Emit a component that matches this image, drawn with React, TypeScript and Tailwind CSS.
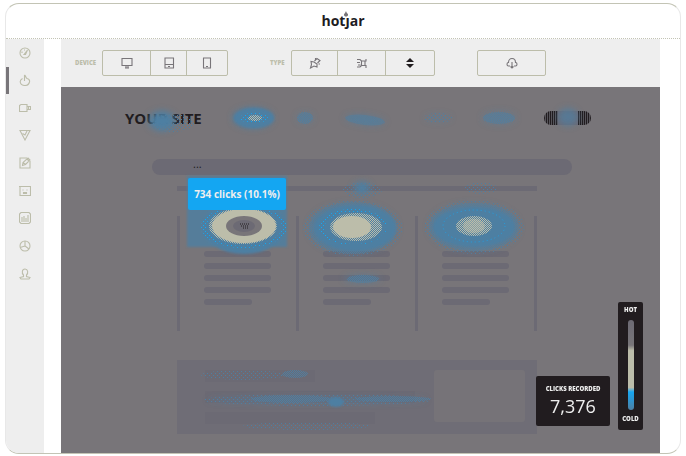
import type { ReactNode } from "react";

const sideIcons: { name: string; art: ReactNode }[] = [
  { name: "Dashboard", art: <><circle cx="6" cy="6" r="5" /><path d="M5 7.500 8.500 3 6.500 7.500zM3 6V4.500M5 3h1" /></> },
  { name: "Heatmaps", art: <path d="M5.500 7V3M5.500 1C7 2 6.500 3.500 8 4.500c2 .5 3 1.500 2.500 3.500C10 10 8.500 11.500 6 11.500S1.500 10 1.200 8C1 6.500 2 5.500 3.500 4.500M5.500 1v2" /> },
  { name: "Recordings", art: <><path d="M.5 3.500 2 2.500h6v7H.5z" /><path d="M8 4.500h3.500v3H8M9.500 4.500v3" /></> },
  { name: "Funnels", art: <><path d="M1 1.500h10L6 11z" /><path d="M3.500 4.500 6 6l2-4" /></> },
  { name: "Forms", art: <><path d="M8 1H1v10h10V4" /><path d="m3.500 8.500.5-3L9 1l2 2-4.500 4.500zM4 5.500l2.500 2M8 2l2 2" /></> },
  { name: "Polls", art: <><path d="M0 1.500h11.500v9H1v-9" /><path d="M3.500 5h1M7.500 5h1M4.500 7.500h3v1h-3z" /></> },
  { name: "Surveys", art: <><path d="M2 .5h8L11.500 2v8L10 11.500H2L.5 10V2z" /><path d="M3 10V5M5 10V4M7 10V6M9 10V3" /></> },
  { name: "Reports", art: <><circle cx="6" cy="6" r="5" /><path d="M6 1v5l4 3M6 6 1 7.500" /></> },
  { name: "Users", art: <path d="M4.500 7C2.500 5 3 1 6 1s3.500 4 1.500 6v1.500l3.500 1-1 1.500H2L1 9.500l3.500-1z" /> },
];

function Art({ children, className = "size-3" }: { children: ReactNode; className?: string }) {
  return (
    <svg viewBox="0 0 12 12" className={className} fill="none" stroke="currentColor" strokeWidth="1.1" aria-hidden="true">
      {children}
    </svg>
  );
}

function ToolButton({ label, className, children }: { label: string; className: string; children: ReactNode }) {
  return (
    <button type="button" aria-label={label} className={`flex h-full items-center justify-center border-[#bcbdaa] ${className}`}>
      {children}
    </button>
  );
}

function Column() {
  return (
    <div className="flex flex-1 flex-col gap-[6px] border-l-3 border-[#6c6a74] pt-[35px] pl-6">
      <span className="h-[6px] w-[67px] rounded-full bg-[#6c6a74]" />
      <span className="h-[6px] w-[67px] rounded-full bg-[#6c6a74]" />
      <span className="h-[6px] w-[67px] rounded-full bg-[#6c6a74]" />
      <span className="h-[6px] w-[67px] rounded-full bg-[#6c6a74]" />
      <span className="h-[6px] w-12 rounded-full bg-[#6c6a74]" />
    </div>
  );
}

function HeatLayer() {
  return (
    <svg viewBox="0 0 599 366" preserveAspectRatio="none" className="pointer-events-none absolute inset-0 size-full" aria-hidden="true">
      <defs>
        <filter id="soft" x="-50%" y="-50%" width="200%" height="200%"><feGaussianBlur stdDeviation="3" /></filter>
        <filter id="edge" x="-50%" y="-50%" width="200%" height="200%"><feGaussianBlur stdDeviation="1" /></filter>
        <pattern id="ink" width="2" height="2" patternUnits="userSpaceOnUse">
          <path d="M0 0h1v1H0zM1 1h1v1H1z" fill="#4e7fa2" />
        </pattern>
        <pattern id="sparse" width="4" height="4" patternUnits="userSpaceOnUse">
          <path d="M0 0h1v1H0zM2 2h1v1H2z" fill="#4e7fa2" />
        </pattern>
        <pattern id="spark" width="4" height="4" patternUnits="userSpaceOnUse">
          <path d="M0 0h1v1H0zM2 2h1v1H2z" fill="#16a6f2" />
        </pattern>
        <pattern id="cream" width="2" height="2" patternUnits="userSpaceOnUse">
          <path d="M0 0h1v1H0zM1 1h1v1H1z" fill="#bcbdaa" />
        </pattern>
      </defs>
      <g fill="#4e7fa2" filter="url(#soft)">
        <ellipse cx="101" cy="34" rx="13" ry="10" />
        <ellipse cx="192" cy="31" rx="20" ry="10" />
        <ellipse cx="244" cy="31" rx="8" ry="5" opacity=".5" />
        <ellipse cx="304" cy="33" rx="20" ry="5" opacity=".5" transform="rotate(6 304 33)" />
        <ellipse cx="377" cy="31" rx="13" ry="4" opacity=".25" />
        <ellipse cx="438" cy="31" rx="17" ry="7" opacity=".35" />
        <ellipse cx="507" cy="30" rx="10" ry="9" opacity=".7" />
        <ellipse cx="301" cy="101" rx="8" ry="6" />
        <ellipse cx="301" cy="192" rx="18" ry="4" opacity=".5" />
        <ellipse cx="292" cy="141" rx="44" ry="25" opacity=".5" />
        <ellipse cx="413" cy="140" rx="45" ry="24" opacity=".4" />
        <ellipse cx="256" cy="313" rx="110" ry="3" opacity=".45" />
      </g>
      <g fill="url(#sparse)">
        <ellipse cx="292" cy="141" rx="50" ry="28" />
        <ellipse cx="413" cy="140" rx="50" ry="27" />
        <ellipse cx="301" cy="103" rx="20" ry="8" />
        <ellipse cx="420" cy="101" rx="16" ry="6" />
        <ellipse cx="182" cy="288" rx="42" ry="5" />
        <ellipse cx="256" cy="313" rx="115" ry="6" />
        <ellipse cx="246" cy="339" rx="64" ry="4" />
        <ellipse cx="377" cy="31" rx="14" ry="5" />
        <ellipse cx="112" cy="36" rx="22" ry="9" />
      </g>
      <g fill="url(#ink)">
        <ellipse cx="292" cy="141" rx="44" ry="26" />
        <ellipse cx="413" cy="140" rx="45" ry="24" />
        <ellipse cx="304" cy="33" rx="20" ry="5" transform="rotate(6 304 33)" />
        <ellipse cx="438" cy="31" rx="16" ry="6" />
        <ellipse cx="244" cy="31" rx="8" ry="6" />
        <ellipse cx="302" cy="192" rx="16" ry="4" />
        <ellipse cx="230" cy="312" rx="40" ry="4" />
        <ellipse cx="332" cy="312" rx="38" ry="3" />
        <ellipse cx="234" cy="287" rx="13" ry="4" />
      </g>
      <g fill="#4e7fa2" filter="url(#edge)">
        <path d="M126 89h100v71H126z" opacity=".8" />
        <ellipse cx="183" cy="140" rx="42" ry="27" />
        <ellipse cx="294" cy="141" rx="41" ry="23" />
        <ellipse cx="413" cy="140" rx="41" ry="20" />
        <ellipse cx="275" cy="315" rx="8" ry="5" />
        <ellipse cx="193" cy="31" rx="20" ry="10" />
      </g>
      <g fill="url(#spark)">
        <ellipse cx="183" cy="140" rx="43" ry="21" />
        <ellipse cx="292" cy="140" rx="34" ry="18" />
        <ellipse cx="193" cy="31" rx="14" ry="5" />
      </g>
      <g fill="#4e7fa2">
        <ellipse cx="183" cy="140" rx="38" ry="19" />
        <ellipse cx="294" cy="141" rx="31" ry="16" />
      </g>
      <ellipse cx="413" cy="139" rx="31" ry="16" fill="none" stroke="#16a6f2" strokeDasharray="1 3" opacity=".8" />
      <ellipse cx="182" cy="139" rx="34" ry="18" fill="url(#cream)" />
      <ellipse cx="183" cy="139" rx="32" ry="17" fill="#bcbdaa" />
      <ellipse cx="183" cy="139" rx="18" ry="10" fill="#787579" />
      <ellipse cx="183" cy="139" rx="11" ry="6" fill="#6c6a74" />
      <path d="M179 137h10M180 139h8M182 141h5" stroke="#211c1f" strokeDasharray="1 1" />
      <ellipse cx="295" cy="140" rx="26" ry="14" fill="url(#cream)" />
      <ellipse cx="291" cy="140" rx="19" ry="11" fill="#bcbdaa" />
      <ellipse cx="413" cy="139" rx="18" ry="10" fill="url(#cream)" />
      <ellipse cx="413" cy="139" rx="11" ry="7" fill="#bcbdaa" opacity=".5" />
      <ellipse cx="194" cy="31" rx="7" ry="3" fill="url(#cream)" />
    </svg>
  );
}

export default function App() {
  return (
    <div className="h-screen bg-white px-[5px] pt-[3px] pb-[2px] font-['Open_Sans','Noto_Sans',sans-serif]">
      <div className="flex h-full flex-col overflow-hidden rounded-[14px] border border-[#c3c4b5] border-r-[#e8e8e8] border-l-[#e8e8e8] bg-white">
        <header className="flex h-[35px] shrink-0 items-center justify-center border-b border-dotted border-[#c3c4b5]">
          <span className="relative text-[14px] leading-5 font-bold text-[#211c1f]">
            hotjar
            <svg viewBox="0 0 6 7" className="absolute top-0 left-[22px] h-[6px] w-[6px] bg-white" aria-hidden="true">
              <path d="M3 0c0 2 3 3 2.500 5L4 6.500H2L.5 5C.5 3 2 3 3 0Z" fill="#787579" />
            </svg>
          </span>
        </header>
        <div className="flex min-h-0 flex-1">
          <nav aria-label="Sections" className="w-[38px] shrink-0 bg-[#eee] text-[#bcbdaa]">
            <div className="flex h-[248px] flex-col justify-between">
              {sideIcons.map((item, i) => (
                <button
                  key={item.name}
                  type="button"
                  aria-label={item.name}
                  className={
                    i === 1
                      ? "flex h-[27px] items-center justify-center border-l-3 border-[#787579] pr-[3px]"
                      : "flex h-[27px] items-center justify-center"
                  }
                >
                  <Art>{item.art}</Art>
                </button>
              ))}
            </div>
          </nav>
          <main className="mr-5 ml-[17px] flex min-w-0 flex-1 flex-col">
            <div className="flex h-12 shrink-0 items-center bg-[#eee] pl-[14px] text-[#787579]">
              <span className="w-[27px] text-[6px] leading-3 font-extrabold text-[#bcbdaa]">DEVICE</span>
              <div role="group" aria-label="Device" className="flex h-[26px] w-[126px] rounded-[2px] border border-[#bcbdaa]">
                <ToolButton label="Desktop" className="w-12 border-r">
                  <Art><path d="M1 1.500h10v7H1zM4 11h4M5 8.500V11M7 8.500V11" /></Art>
                </ToolButton>
                <ToolButton label="Tablet" className="w-9 border-r">
                  <Art><path d="M2 1h8.500v10H2zM2 7.500h8.500M5 9.500h2" /></Art>
                </ToolButton>
                <ToolButton label="Phone" className="flex-1">
                  <Art><path d="M2.500 1h7v10h-7zM5 9.500h2" /></Art>
                </ToolButton>
              </div>
              <span className="ml-[42px] w-[21px] text-[6px] leading-3 font-extrabold text-[#bcbdaa]">TYPE</span>
              <div role="group" aria-label="Type" className="flex h-[26px] w-36 rounded-[2px] border border-[#bcbdaa]">
                <ToolButton label="Clicks" className="w-[46px] border-r">
                  <Art><path d="m1.500 11 1-3.500-.5-3 3 .5L8 7v3L5 9zM5.500 4 8 1.500l3 2L8.500 6M6.500 2.500V1M9.500 7H11" /></Art>
                </ToolButton>
                <ToolButton label="Moves" className="w-12 border-r">
                  <Art><path d="M1 2.500h3L5.500 4H10V2M1 5.500h3M2 8h2.500M1 10h3l1.500-1.500H10V11M5.500 4v4.500M9 4v4.500" /></Art>
                </ToolButton>
                <ToolButton label="Scroll" className="flex-1">
                  <svg viewBox="0 0 12 12" className="size-3" fill="#211c1f" aria-hidden="true">
                    <path d="M6 1l4 4H2zM6 11l4-4H2z" />
                  </svg>
                </ToolButton>
              </div>
              <button type="button" aria-label="Download" className="ml-[42px] flex h-[26px] w-[69px] items-center justify-center rounded-[2px] border border-[#bcbdaa]">
                <Art><path d="M4 9H2.500C.5 9 .5 5.500 2.500 5.500 2.500 3 4 1.500 6 1.500s3.500 1.500 3.500 4c2 0 2 3.500 0 3.500H8M6 5v6M4.500 9.500 6 11l1.500-1.500" /></Art>
              </button>
            </div>

            <section aria-label="Click heatmap" className="relative min-h-0 flex-1 overflow-hidden bg-[#787579]">
              <div className="flex h-[88px] flex-col pr-[69px] pl-16">
                <div className="flex items-center justify-between pt-5">
                  <span className="text-[15px] leading-[22px] font-bold text-[#211c1f]">YOUR SITE</span>
                  <span className="flex h-[14px] w-[47px] justify-between overflow-hidden rounded-full bg-[repeating-linear-gradient(90deg,#211c1f_0_1px,#56545a_1px_2px)]">
                    <span className="mx-auto h-full w-5 bg-[#6c6a74]" />
                  </span>
                </div>
                <div className="mt-[30px] mr-[19px] ml-[27px] h-4 shrink-0 rounded-full bg-[#6c6a74] pl-[41px] text-[11px] leading-[10px] text-[#211c1f]">
                  ...
                </div>
              </div>
              <div className="mx-auto w-[367px] pt-[11px] pr-[7px]">
                <div className="h-[5px] bg-[#6c6a74]" />
                <div className="mt-[25px] flex h-[115px] border-r-3 border-[#6c6a74]">
                  <Column />
                  <Column />
                  <Column />
                </div>
                <div className="mt-[29px] flex h-[74px] items-start justify-between bg-[#6f6d76] py-[10px] pr-3 pl-7">
                  <div className="flex flex-col gap-[9px]">
                    <span className="h-3 w-[110px] bg-[#6c6a74]" />
                    <span className="h-3 w-[210px] bg-[#6c6a74]" />
                    <span className="h-3 w-[170px] bg-[#6c6a74]" />
                  </div>
                  <span className="h-[52px] w-[91px] rounded-[3px] bg-[#767378]" />
                </div>
              </div>

              <HeatLayer />

              <div role="tooltip" className="absolute top-[91px] left-[127px] flex h-8 w-[98px] items-center justify-center rounded-[2px] bg-[#14a6f2] text-[10px] font-bold whitespace-nowrap text-[#eee]">
                734 clicks (10.1%)
              </div>
              <div className="absolute right-[17px] bottom-[23px] flex items-end gap-2 text-[#eee]">
                <div className="mb-1 flex h-[50px] w-[74px] flex-col items-center justify-center rounded-[2px] bg-[#211c1f]">
                  <span className="text-[6px] leading-[10px] font-extrabold whitespace-nowrap">CLICKS RECORDED</span>
                  <span className="text-[18px] leading-6">7,376</span>
                </div>
                <div className="flex h-32 w-[25px] flex-col items-center justify-between rounded-[2px] bg-[#211c1f] pt-[3px] pb-[6px] text-[6px] leading-[10px] font-extrabold">
                  <span>HOT</span>
                  <span className="h-[90px] w-[6px] rounded-full bg-[linear-gradient(#6c6a74_0%,#787579_28%,#bcbdaa_34%,#bcbdaa_75%,#16a6f2_80%,#4e7fa2_100%)]" />
                  <span>COLD</span>
                </div>
              </div>
            </section>
          </main>
        </div>
      </div>
    </div>
  );
}
